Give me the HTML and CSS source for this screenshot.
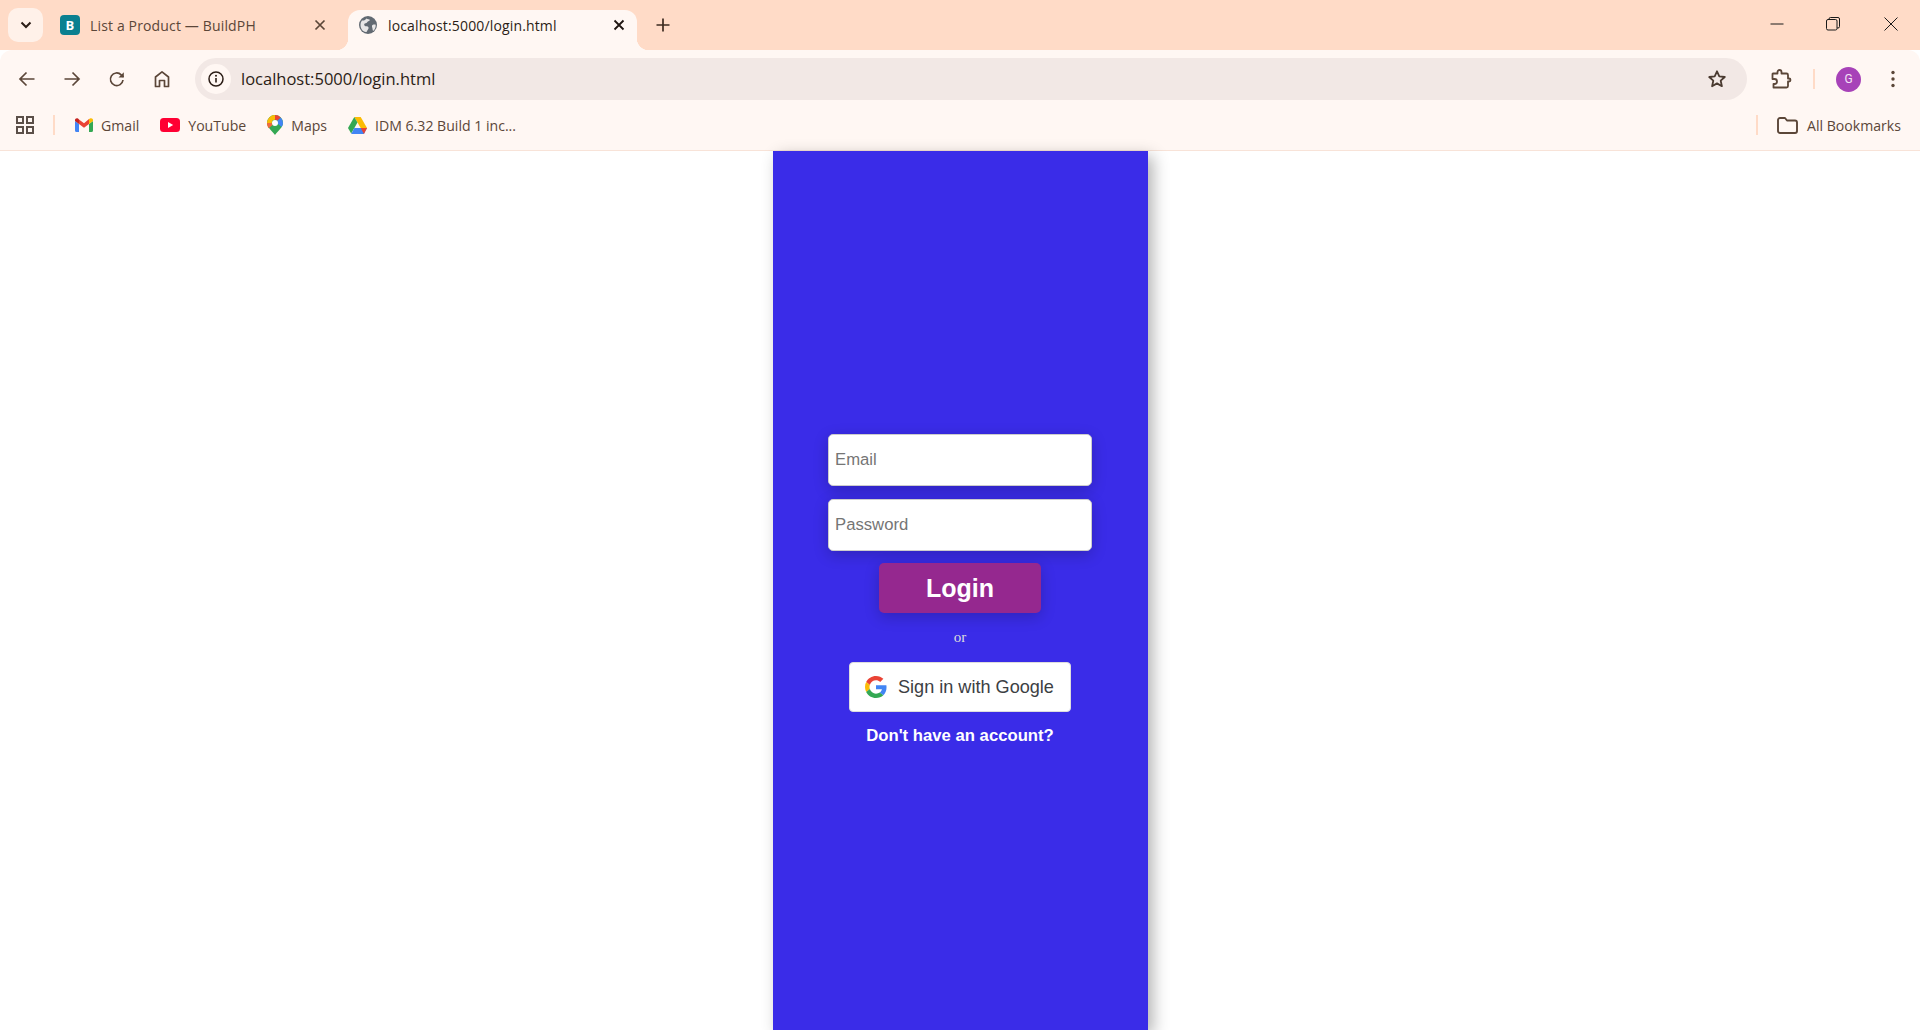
FILE: index.html
```html
<!DOCTYPE html>
<html lang="en">
<head>
    <meta charset="UTF-8">
    <meta name="viewport" content="width=device-width, initial-scale=1.0">
    <title>Login</title>
    <link rel="stylesheet" href="styles.css">
</head>
<body>
    <div class="browser">
        <!-- Tab strip -->
        <div class="tabstrip">
            <button class="tab-search">
                <svg width="12" height="8" viewBox="0 0 12 8"><path d="M1.5 1.5 6 6l4.5-4.5" fill="none" stroke="#2b1d16" stroke-width="2"/></svg>
            </button>
            <div class="tab">
                <span class="favicon-b">B</span>
                <span class="tab-title">List a Product — BuildPH</span>
                <svg class="tab-close" width="12" height="12" viewBox="0 0 12 12"><path d="M1.5 1.5l9 9M10.5 1.5l-9 9" stroke="#5b4638" stroke-width="1.7"/></svg>
            </div>
            <div class="tab tab-active">
                <svg class="favicon-globe" width="20" height="20" viewBox="0 0 20 20">
                    <circle cx="10" cy="10" r="9" fill="#626a72"/>
                    <path d="M4 5.5c2 .3 3.5-.5 4.5-2 1 .7 2.800.6 3.500 1.500-.8 1.400-2.500 1.200-3 2.500-.4 1.300-2.300.3-2.800 1.700-.3 1.200 1.100 2.300 2.500 2.100 1.400-.1 2.200 1 1.800 2.300-.4 1.200-1.300 2-1.600 3.200C5.200 17.500 2.500 14 2.500 10c0-1.700.5-3.200 1.500-4.500z" fill="#e8e6e6"/>
                    <path d="M14.500 10c1.200-.6 2.500-.6 3.200-.2.200 2.400-.8 4.800-2.500 6.200-.8-1-.5-2.200-.9-3.200-.3-1-.6-2.100.2-2.800z" fill="#e8e6e6"/>
                </svg>
                <span class="tab-title">localhost:5000/login.html</span>
                <svg class="tab-close" width="12" height="12" viewBox="0 0 12 12"><path d="M1.5 1.5l9 9M10.500 1.500l-9 9" stroke="#1f1511" stroke-width="1.800"/></svg>
            </div>
            <svg class="new-tab" width="14" height="14" viewBox="0 0 14 14"><path d="M7 .5v13M.5 7h13" stroke="#3d2b20" stroke-width="1.700"/></svg>
            <div class="window-controls">
                <svg class="win-min" width="14" height="14" viewBox="0 0 14 14"><path d="M.5 7h13" stroke="#1a1a1a" stroke-width="1"/></svg>
                <svg width="14" height="14" viewBox="0 0 14 14"><rect x=".5" y="2.500" width="10.500" height="10.500" rx="1.500" fill="none" stroke="#1a1a1a"/><path d="M3 2.500V2A1.500 1.500 0 0 1 4.500.5h7.500A1.500 1.500 0 0 1 13.500 2v7.500A1.500 1.500 0 0 1 12 11h-1" fill="none" stroke="#1a1a1a"/></svg>
                <svg width="14" height="14" viewBox="0 0 14 14"><path d="M.5.5l13 13M13.500.5l-13 13" stroke="#1a1a1a" stroke-width="1"/></svg>
            </div>
        </div>

        <!-- Toolbar -->
        <div class="toolbar">
            <div class="nav-icons">
                <svg width="18" height="18" viewBox="0 0 18 18"><path d="M16.500 9h-14M8.500 2.500 2 9l6.500 6.500" fill="none" stroke="#5b4638" stroke-width="1.700"/></svg>
                <svg width="18" height="18" viewBox="0 0 18 18"><path d="M1.500 9h14M9.500 2.500 16 9l-6.500 6.500" fill="none" stroke="#5b4638" stroke-width="1.700"/></svg>
                <svg width="18" height="18" viewBox="0 0 18 18"><path d="M15 10a6.300 6.300 0 1 1-1.800-5.200L15.500 7" fill="none" stroke="#5b4638" stroke-width="1.700"/><path d="M15.800 2.200v5.300h-5.300z" fill="#5b4638"/></svg>
                <svg width="18" height="18" viewBox="0 0 18 18"><path d="M2.500 16.500V7L9 1.800 15.500 7v9.500h-4v-6h-5v6z" fill="none" stroke="#5b4638" stroke-width="1.700" stroke-linejoin="round"/></svg>
            </div>
            <div class="omnibox">
                <span class="site-info">
                    <svg width="16" height="16" viewBox="0 0 16 16"><circle cx="8" cy="8" r="7" fill="none" stroke="#2b1d16" stroke-width="1.500"/><path d="M8 7v4.500" stroke="#2b1d16" stroke-width="1.600"/><circle cx="8" cy="4.800" r="1" fill="#2b1d16"/></svg>
                </span>
                <span class="url">localhost:5000/login.html</span>
                <svg class="star" width="20" height="20" viewBox="0 0 20 20"><path d="M10 2.300l2.300 5.100 5.500.6-4.100 3.700 1.200 5.500-4.900-2.800-4.900 2.800 1.200-5.500L2.200 8l5.500-.6z" fill="none" stroke="#4a3a30" stroke-width="1.800" stroke-linejoin="round"/></svg>
            </div>
            <svg class="puzzle" width="22" height="22" viewBox="0 0 22 22"><path d="M3 5.500h4.500V4a2 2 0 0 1 4 0v1.500h5a1.500 1.500 0 0 1 1.500 1.500v3.500h1a1.500 1.500 0 0 1 0 3h-1V18a1.500 1.500 0 0 1-1.500 1.500H3.500V16h1a2.500 2.500 0 0 0 0-5h-2V6z" fill="none" stroke="#5b4638" stroke-width="1.800" stroke-linejoin="round"/></svg>
            <span class="divider"></span>
            <span class="avatar">G</span>
            <svg class="menu-dots" width="4" height="18" viewBox="0 0 4 18"><circle cx="2" cy="2.500" r="1.700" fill="#5b4638"/><circle cx="2" cy="9" r="1.700" fill="#5b4638"/><circle cx="2" cy="15.500" r="1.700" fill="#5b4638"/></svg>
        </div>

        <!-- Bookmarks bar -->
        <div class="bookmarks">
            <svg class="apps" width="20" height="20" viewBox="0 0 20 20"><g fill="none" stroke="#5b4f48" stroke-width="2"><rect x="2" y="2" width="6" height="6"/><rect x="12" y="2" width="6" height="6"/><rect x="2" y="12" width="6" height="6"/><rect x="12" y="12" width="6" height="6"/></g></svg>
            <span class="divider"></span>
            <a class="bookmark">
                <svg width="18" height="14" viewBox="0 0 18 14"><path d="M0 3v9.500A1.500 1.500 0 0 0 1.500 14H4V6z" fill="#4285f4"/><path d="M18 3v9.500a1.500 1.500 0 0 1-1.500 1.500H14V6z" fill="#34a853"/><path d="M14 1v5l4-3V2c0-1.600-1.900-2.400-3-1.400z" fill="#fbbc04"/><path d="M4 6V1.500L9 5.300l5-4.300v5L9 9.800z" fill="#ea4335"/><path d="M0 2v1l4 3V1.500L3 .6C1.900-.4 0 .4 0 2z" fill="#c5221f"/></svg>
                Gmail
            </a>
            <a class="bookmark">
                <svg width="20" height="14" viewBox="0 0 20 14"><rect width="20" height="14" rx="3.500" fill="#ff0033"/><path d="M8 4l5.200 3L8 10z" fill="#fff"/></svg>
                YouTube
            </a>
            <a class="bookmark">
                <svg width="16" height="20" viewBox="0 0 16 20"><path d="M8 0a8 8 0 0 1 8 8c0 4.500-4.500 7-8 12C4.500 15 0 12.500 0 8a8 8 0 0 1 8-8z" fill="#34a853"/><path d="M2.300 2.400A8 8 0 0 1 8 0v4.800A3.200 3.200 0 0 0 4.800 8H0a8 8 0 0 1 2.300-5.600z" fill="#fbbc04"/><path d="M8 0a8 8 0 0 1 5.700 2.400L10.300 5.800A3.200 3.200 0 0 0 8 4.800z" fill="#ea4335"/><path d="M13.700 2.400A8 8 0 0 1 16 8c0 1.500-.6 2.800-1.400 4l-4.300-3.700a3.200 3.200 0 0 0 0-2.500z" fill="#4285f4"/><path d="M0 8h4.800c0 .7.300 1.400.8 2l-4 3.300C.6 11.800 0 10 0 8z" fill="#f06a3c"/><circle cx="8" cy="8" r="3" fill="#fff"/></svg>
                Maps
            </a>
            <a class="bookmark">
                <svg width="19" height="17" viewBox="0 0 19 17"><path d="M6.300 0h6.400l6.300 11h-6.300z" fill="#fbbc04"/><path d="M6.300 0 0 11l3.200 5.500L9.500 5.500z" fill="#34a853"/><path d="M3.200 17 6.300 11h12.700l-3.100 6z" fill="#4285f4"/><path d="M12.700 11H19l-3.100 6z" fill="#ea4335"/></svg>
                IDM 6.32 Build 1 inc...
            </a>
            <span class="divider bookmarks-end"></span>
            <a class="bookmark all-bookmarks">
                <svg width="21" height="17" viewBox="0 0 21 17"><path d="M1 3a2 2 0 0 1 2-2h5l2 2.500h8a2 2 0 0 1 2 2V14a2 2 0 0 1-2 2H3a2 2 0 0 1-2-2z" fill="none" stroke="#5b4638" stroke-width="1.900" stroke-linejoin="round"/></svg>
                All Bookmarks
            </a>
        </div>

        <!-- Page content -->
        <div class="page">
            <div class="login-panel">
                <input class="login-input" type="email" placeholder="Email">
                <input class="login-input" type="password" placeholder="Password">
                <button class="login-btn">Login</button>
                <p class="or-text">or</p>
                <button class="google-btn">
                    <svg width="22" height="22" viewBox="0 0 48 48">
                        <path fill="#EA4335" d="M24 9.500c3.540 0 6.710 1.220 9.210 3.600l6.850-6.850C35.900 2.380 30.470 0 24 0 14.620 0 6.510 5.380 2.560 13.220l7.980 6.190C12.430 13.720 17.740 9.500 24 9.500z"/>
                        <path fill="#4285F4" d="M46.980 24.550c0-1.570-.15-3.090-.38-4.550H24v9.020h12.940c-.58 2.960-2.260 5.480-4.780 7.180l7.730 6c4.510-4.180 7.090-10.360 7.090-17.650z"/>
                        <path fill="#FBBC05" d="M10.530 28.590c-.48-1.450-.76-2.990-.76-4.590s.27-3.140.76-4.590l-7.980-6.190C.92 16.460 0 20.120 0 24c0 3.880.92 7.540 2.560 10.780l7.970-6.190z"/>
                        <path fill="#34A853" d="M24 48c6.480 0 11.930-2.130 15.890-5.810l-7.730-6c-2.150 1.450-4.920 2.300-8.160 2.300-6.260 0-11.570-4.220-13.470-9.910l-7.980 6.190C6.510 42.620 14.620 48 24 48z"/>
                    </svg>
                    Sign in with Google
                </button>
                <a class="signup-link">Don't have an account?</a>
            </div>
        </div>
    </div>
</body>
</html>
```

FILE: styles.css
```css
/* Basic Reset */
* {
    box-sizing: border-box;
    margin: 0;
    padding: 0;
}

body {
    font-family: "Open Sans", "Noto Sans", sans-serif;
    background-color: #fff;
    overflow: hidden;
}

.browser {
    display: flex;
    flex-direction: column;
    height: 100vh;
}

/* Tab strip */
.tabstrip {
    display: flex;
    align-items: flex-end;
    height: 50px;
    background-color: #ffdbc7;
}

.tab-search {
    display: flex;
    align-items: center;
    justify-content: center;
    width: 35px;
    height: 34px;
    margin: 0 5px 8px 8px;
    border: none;
    border-radius: 10px;
    background-color: #fff1e9;
}

.tab {
    display: flex;
    align-items: center;
    width: 289px;
    height: 40px;
    padding: 0 11px 10px 12px;
    font-size: 14px;
    letter-spacing: 0.15px;
    color: #5b4638;
}

.tab-title {
    flex: 1;
    margin-left: 10px;
    white-space: nowrap;
}

.tab-active {
    position: relative;
    margin-left: 11px;
    padding-left: 10px;
    border-radius: 12px 12px 0 0;
    background-color: #fff7f3;
    color: #2b1d16;
}

.tab-active .tab-close {
    margin-right: 1px;
}

.tab-active::before,
.tab-active::after {
    content: "";
    position: absolute;
    bottom: 0;
    width: 12px;
    height: 12px;
}

.tab-active::before {
    left: -12px;
    background: radial-gradient(circle at 0 0, transparent 12px, #fff7f3 12.5px);
}

.tab-active::after {
    right: -12px;
    background: radial-gradient(circle at 100% 0, transparent 12px, #fff7f3 12.5px);
}

.favicon-b {
    display: flex;
    align-items: center;
    justify-content: center;
    width: 20px;
    height: 20px;
    border-radius: 4px;
    background-color: #0b8090;
    color: #fff;
    font-size: 13px;
    font-weight: 700;
}

.new-tab {
    margin: 0 0 18px 19px;
}

.window-controls {
    display: flex;
    gap: 44px;
    margin: 0 22px 19px auto;
}

.win-min {
    margin-right: -2px;
}

/* Toolbar */
.toolbar {
    display: flex;
    align-items: center;
    height: 50px;
    padding-top: 8px;
    border-radius: 12px 12px 0 0;
    background-color: #fff7f3;
}

.nav-icons {
    display: flex;
    gap: 27px;
    margin-left: 18px;
}

.omnibox {
    display: flex;
    align-items: center;
    width: 1552px;
    height: 42px;
    margin-left: 24px;
    padding: 0 20px 0 6px;
    border-radius: 21px;
    background-color: #f2e8e5;
}

.site-info {
    display: flex;
    align-items: center;
    justify-content: center;
    width: 30px;
    height: 30px;
    border-radius: 50%;
    background-color: #fff7f3;
}

.url {
    flex: 1;
    margin-left: 10px;
    padding-bottom: 2px;
    font-size: 16.5px;
    color: #2b1d16;
}

.puzzle {
    margin-left: 23px;
}

.toolbar .divider {
    margin-left: 21px;
}

.divider {
    width: 2px;
    height: 20px;
    background-color: #ffdbc7;
}

.avatar {
    display: flex;
    align-items: center;
    justify-content: center;
    width: 25px;
    height: 25px;
    margin-left: 21px;
    border-radius: 50%;
    background-color: #a742b8;
    color: #f3e3f5;
    font-family: "Roboto", sans-serif;
    font-size: 12px;
}

.menu-dots {
    margin-left: 30px;
}

/* Bookmarks bar */
.bookmarks {
    display: flex;
    align-items: center;
    gap: 21px;
    height: 51px;
    padding-left: 15px;
    border-bottom: 1px solid #f8e3d8;
    background-color: #fff7f3;
}

.apps {
    margin-right: -3px;
}

.bookmark {
    display: flex;
    align-items: center;
    gap: 8px;
    font-size: 14.1px;
    color: #5b4638;
    white-space: nowrap;
}

.bookmark:nth-of-type(1) {
    margin-left: -1px;
}

.bookmarks-end {
    margin-left: auto;
}

.all-bookmarks {
    gap: 9px;
    margin: 0 19px 0 -2px;
}

/* Page content */
.page {
    flex: 1;
    display: flex;
    justify-content: center;
    min-height: 0;
}

.login-panel {
    display: flex;
    flex-direction: column;
    align-items: center;
    justify-content: center;
    width: 375px;
    padding-bottom: 2px;
    background-color: #3a2ce8;
    box-shadow: 5px 5px 15px rgba(0, 0, 0, 0.3);
    font-family: "Liberation Sans", Arial, sans-serif;
}

.login-input {
    width: 264px;
    height: 52px;
    margin-bottom: 13px;
    padding: 0 6px;
    border: 1px solid #ccc;
    border-radius: 5px;
    font-family: "Liberation Sans", Arial, sans-serif;
    font-size: 16.7px;
    box-shadow: 0 4px 15px rgba(0, 0, 0, 0.2);
}

.login-input::placeholder {
    color: #757575;
}

.login-btn {
    width: 162px;
    height: 50px;
    margin-top: -1px;
    border: none;
    border-radius: 5px;
    background-color: #95288f;
    color: #fff;
    font-family: "Liberation Sans", Arial, sans-serif;
    font-size: 25px;
    font-weight: bold;
    box-shadow: 0 4px 15px rgba(0, 0, 0, 0.2);
}

.or-text {
    margin: 16px 0 16px;
    font-family: "Liberation Serif", serif;
    font-size: 15px;
    line-height: 17px;
    color: #ddd;
}

.google-btn {
    display: flex;
    align-items: center;
    gap: 11px;
    width: 222px;
    height: 50px;
    padding-left: 15px;
    border: 1px solid #ddd;
    border-radius: 4px;
    background-color: #fff;
    color: #3c4043;
    font-family: "Liberation Sans", Arial, sans-serif;
    font-size: 18.1px;
}

.signup-link {
    margin-top: 15px;
    font-size: 16.7px;
    line-height: 18px;
    font-weight: bold;
    color: #fff;
}
```
